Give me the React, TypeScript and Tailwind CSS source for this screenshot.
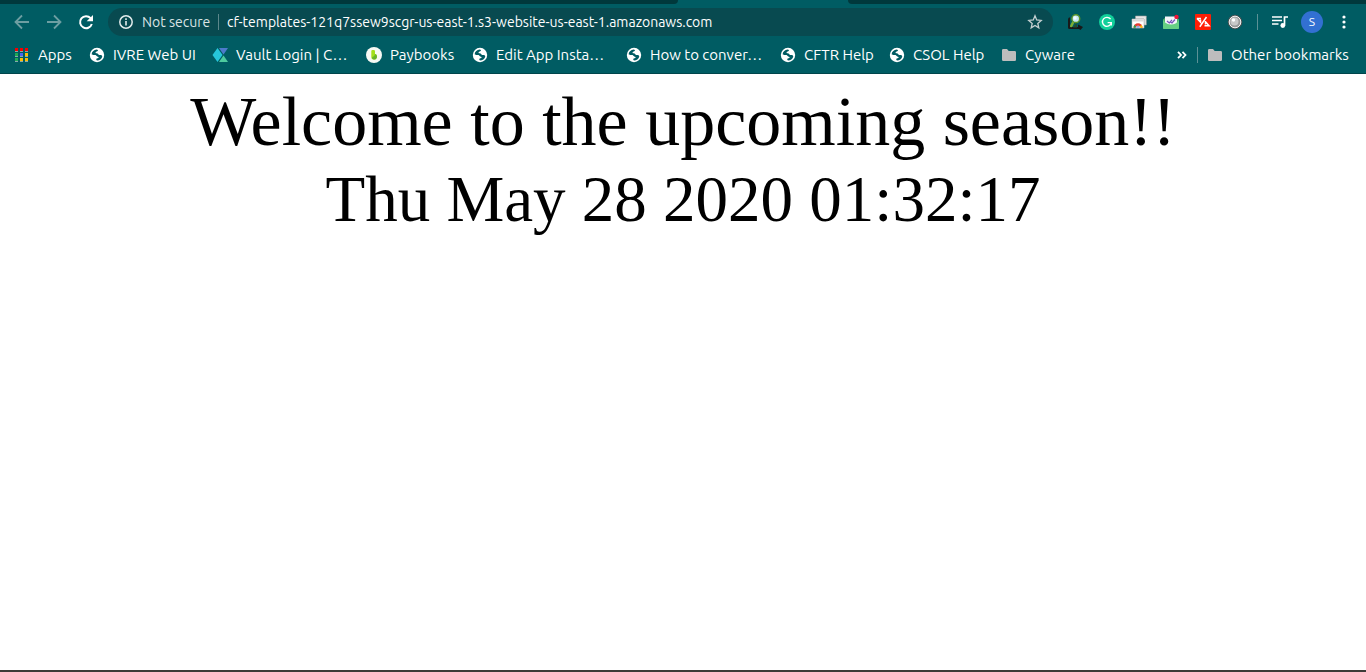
import type { ReactNode } from "react";

function GlobeIcon() {
  return (
    <svg className="size-4 shrink-0" viewBox="0 0 16 16" aria-hidden="true">
      <circle cx="8" cy="8" r="7.2" fill="#fff" />
      <path
        d="M2.6 7.2C3 4.6 5 3 7.6 2.6L9 2.9 8.6 4.2 7 4.8 6.4 6 8.6 6.4 10 8H12.4L13.3 9.4C12.6 11.8 10.6 13.4 8 13.5L7.2 12.8 7.6 11.6 9.4 11 9.6 9.9 8.2 9.6 6.6 8.1 4.2 8Z"
        fill="#005c63"
      />
      <path d="M9.4 3.2 11.2 4.2 10.8 5.4 9 5.8 8 5.2ZM3.2 9.4 6 9.8 6.6 11.4 5.8 12.6C4.4 11.9 3.5 10.8 3.2 9.4Z" fill="#fff" />
    </svg>
  );
}

function FolderIcon() {
  return (
    <svg className="size-4 shrink-0" viewBox="0 0 16 16" aria-hidden="true">
      <path d="M1 3.3Q1 2 2.3 2H6l1.7 2h6Q15 4 15 5.3v7.4q0 1.3-1.3 1.3H2.3Q1 14 1 12.700z" fill="#bdbdbd" />
    </svg>
  );
}

function AppsIcon() {
  const rows = [
    ["#f60000", "#f60000", "#f60000"],
    ["#1faa53", "#4a62f2", "#fbbc05"],
    ["#1faa53", "#fbbc05", "#fbbc05"],
  ];
  return (
    <svg className="size-4 shrink-0" viewBox="0 0 16 16" aria-hidden="true" shapeRendering="crispEdges">
      {rows.map((row, y) =>
        row.map((fill, x) => (
          <g key={`${x}-${y}`}>
            <rect x={1 + x * 5} y={1 + y * 5} width="3" height="3" fill={fill} />
            <rect x={1 + x * 5} y={4 + y * 5} width="3" height="1" fill="#8aa9ab" />
          </g>
        )),
      )}
    </svg>
  );
}

function VaultIcon() {
  return (
    <svg className="size-4 shrink-0" viewBox="0 0 16 16" aria-hidden="true">
      <path d="M5.500 1 10.500 8 5.500 15 .5 8z" fill="#26c6da" />
      <path d="M7 1h9l-4.500 6.500z" fill="#4c7bcb" />
      <path d="M7 15h9l-4.500-6.500z" fill="#4ecb9f" />
    </svg>
  );
}

function PaybooksIcon() {
  return (
    <svg className="size-4 shrink-0" viewBox="0 0 16 16" aria-hidden="true">
      <circle cx="8" cy="8" r="8" fill="#f7f9f4" />
      <path d="M5.300 4.200Q5.300 3 6.500 3h1.300Q9 3 9 4.200v2.900q2 .4 2 2.400 0 3.100-3.100 3.100-2.600 0-2.600-2.500z" fill="#a4e01b" />
      <path d="M7.600 12.600Q6 12.400 6 10.800q0-1 1.500-1.300Q9 9 9 7.100q2 .4 2 2.400 0 3.100-3.400 3.100z" fill="#69b42b" />
    </svg>
  );
}

function Stroke({ children }: { children: ReactNode }) {
  return (
    <svg className="size-4" viewBox="0 0 16 16" fill="none" stroke="currentColor" strokeWidth="1.8" aria-hidden="true">
      {children}
    </svg>
  );
}

type Bookmark = { label: string; icon: ReactNode; width: string };

const bookmarks: Bookmark[] = [
  { label: "Apps", icon: <AppsIcon />, width: "w-[75px]" },
  { label: "IVRE Web UI", icon: <GlobeIcon />, width: "w-[123px]" },
  { label: "Vault Login | C…", icon: <VaultIcon />, width: "w-[154px]" },
  { label: "Paybooks", icon: <PaybooksIcon />, width: "w-[106px]" },
  { label: "Edit App Insta…", icon: <GlobeIcon />, width: "w-[154px]" },
  { label: "How to conver…", icon: <GlobeIcon />, width: "w-[154px]" },
  { label: "CFTR Help", icon: <GlobeIcon />, width: "w-[109px]" },
  { label: "CSOL Help", icon: <GlobeIcon />, width: "w-[112px]" },
  { label: "Cyware", icon: <FolderIcon />, width: "w-[90px]" },
];

const extensions: { label: string; icon: ReactNode }[] = [
  {
    label: "Inspector",
    icon: (
      <>
        <path d="M2 3.500Q1 4 1 6v7.500Q1 15 2.500 15H12V13H3V3.500z" fill="#191919" />
        <path d="M11 10.500l5 2.500-2.500 3-2.500-1.500z" fill="#181818" />
        <path d="M9 9.500h1v4H6z" fill="#244b2f" />
        <path d="M6.500 7.500 4.300 12" stroke="#7caf35" strokeWidth="2.600" strokeLinecap="round" />
        <circle cx="8.800" cy="4.700" r="3.900" fill="#c5e7f5" stroke="#599329" strokeWidth="1.500" />
        <circle cx="8" cy="4" r="1.700" fill="#f2fbff" />
      </>
    ),
  },
  {
    label: "Grammar checker",
    icon: (
      <>
        <circle cx="8" cy="8" r="8" fill="#11cf9a" />
        <path d="M11.600 5.200A4.500 4.500 0 1 0 12.300 9M8.600 8.600h3.700v3" fill="none" stroke="#fff" strokeWidth="1.400" />
      </>
    ),
  },
  {
    label: "Web store",
    icon: (
      <>
        <path d="M4.500 2h10.800v9H13V5H4.500z" fill="#e8e8e8" stroke="#9a9a9a" strokeWidth=".6" />
        <path d="M1 5h12v9H1z" fill="#fff" stroke="#b5b5b5" strokeWidth=".6" />
        <path d="M1.300 5.300h11.500v2.200H1.300z" fill="#d9d9d9" />
        <path d="M2.500 13.700a4.500 4.500 0 0 1 9-0z" fill="#e53b30" />
        <path d="M2.500 13.700q0-1.800 1-3l2.500 3z" fill="#2ba24c" />
        <path d="M8 13.700l2.500-3q1 1.200 1 3z" fill="#fbc116" />
        <path d="M4.900 13.700a2.200 2.200 0 0 1 4.300 0z" fill="#4285f4" stroke="#fff" strokeWidth=".5" />
      </>
    ),
  },
  {
    label: "Mail tracker",
    icon: (
      <>
        <path d="M0 5.500 3 3h10L16 5.500V14q0 1-1 1H1q-1 0-1-1z" fill="#4caf6c" />
        <path d="M2 2.500h12v7L8 12 2 9z" fill="#f5f5fa" />
        <path d="M0 6l3 3.200q5 2.600 10 0L16 6v8q0 1-1 1H1q-1 0-1-1z" fill="#66cf84" />
        <path d="M4 7 6.300 9 9 5.800M7.500 8 9 9 12 5.500" fill="none" stroke="#7752bd" strokeWidth="1.200" />
        <circle cx="13.500" cy="2.900" r="2.200" fill="#f01438" />
      </>
    ),
  },
  {
    label: "Code tool",
    icon: (
      <>
        <rect width="16" height="16" rx="1" fill="#ff1e05" />
        <path d="M1.800 4.500H6M2 4.500 5.500 8.200V5.500M11.500 3 4.800 12.700M10.500 10.500V7.800L14 11.800H9.500" fill="none" stroke="#fff" strokeWidth="1.500" />
      </>
    ),
  },
  {
    label: "Recorder",
    icon: (
      <>
        <circle cx="8" cy="8" r="6.800" fill="#777" stroke="#494949" strokeWidth=".8" />
        <circle cx="8" cy="8" r="5.800" fill="#999" stroke="#f4f4f4" strokeWidth="1" />
        <circle cx="7.500" cy="7.500" r="4" fill="#c8c8c8" />
        <circle cx="6.500" cy="6" r="1.700" fill="#fff" />
      </>
    ),
  },
];

function BookmarkLink({ label, icon, width }: Bookmark) {
  return (
    <a href="#" className={`flex h-7 shrink-0 items-center gap-2 whitespace-nowrap ${width}`}>
      {icon}
      <span>{label}</span>
    </a>
  );
}

export default function App() {
  return (
    <div className="flex min-h-screen flex-col bg-white">
      <header className="border-b border-[#00454b] bg-[#005c63] font-['Ubuntu','Open_Sans',sans-serif] text-white">
        <div className="flex h-1">
          <div className="w-[678px] rounded-br bg-[#00383c]" />
          <div className="w-[170px]" />
          <div className="flex-1 rounded-bl bg-[#00383c]" />
        </div>

        <div className="flex h-9 items-center px-[14px]">
          <nav className="flex gap-4" aria-label="Navigation">
            <button type="button" aria-label="Back" className="text-[#6d9ea2]">
              <Stroke><path d="M15 8H2M8 1.500 1.500 8 8 14.500" /></Stroke>
            </button>
            <button type="button" aria-label="Forward" className="text-[#6d9ea2]">
              <Stroke><path d="M1 8h13M8 1.500 14.500 8 8 14.500" /></Stroke>
            </button>
            <button type="button" aria-label="Reload">
              <svg className="size-4" viewBox="0 0 16 16" aria-hidden="true">
                <path d="M12.600 4.200A6 6 0 1 0 13.800 10" fill="none" stroke="#fff" strokeWidth="2" />
                <path d="M15 1v6.300H8.700z" fill="#fff" />
              </svg>
            </button>
          </nav>

          <div className="ml-[14px] flex h-7 flex-1 items-center rounded-full bg-[#084a50] px-[10px] text-sm">
            <svg className="size-4 shrink-0" viewBox="0 0 16 16" fill="none" stroke="#e3ecec" aria-hidden="true">
              <circle cx="8" cy="8" r="6.200" strokeWidth="1.500" />
              <path d="M8 7v4.500M8 4.300v1.700" strokeWidth="1.600" />
            </svg>
            <label htmlFor="address" className="ml-2 w-[76px] whitespace-nowrap text-[#dbe4e5]">Not secure</label>
            <div className="h-4 w-px bg-[#5c878b]" />
            <input
              id="address"
              type="text"
              defaultValue="cf-templates-121q7ssew9scgr-us-east-1.s3-website-us-east-1.amazonaws.com"
              className="ml-2 min-w-0 flex-1 bg-transparent outline-none"
            />
            <button type="button" aria-label="Bookmark this page">
              <svg className="size-4" viewBox="0 0 16 16" fill="none" stroke="#c5d0d1" strokeWidth="1.300" aria-hidden="true">
                <path d="M8 1.800 9.700 6l4.500.4-3.400 3 1 4.400L8 11.500l-3.800 2.300 1-4.400-3.400-3L6.300 6z" />
              </svg>
            </button>
          </div>

          <div className="ml-[14px] flex gap-4">
            {extensions.map((extension) => (
              <button key={extension.label} type="button" aria-label={extension.label}>
                <svg className="size-4" viewBox="0 0 16 16" aria-hidden="true">{extension.icon}</svg>
              </button>
            ))}
          </div>
          <div className="mx-[14px] h-4 w-px bg-[#5c9196]" />
          <button type="button" aria-label="Media controls">
            <svg className="size-4" viewBox="0 0 16 16" aria-hidden="true">
              <path d="M0 3h10M0 6.500h10M0 10h6.500M12.500 11.500V3H16" fill="none" stroke="#fff" strokeWidth="1.700" />
              <circle cx="10.800" cy="11.500" r="2.400" fill="#fff" />
            </svg>
          </button>
          <button type="button" aria-label="Profile" className="ml-[13px] size-[22px] rounded-full bg-[#3270d2] text-xs leading-[22px]">
            S
          </button>
          <button type="button" aria-label="Menu" className="ml-[13px]">
            <svg className="size-4" viewBox="0 0 16 16" fill="#fff" aria-hidden="true">
              <circle cx="8" cy="3" r="1.600" />
              <circle cx="8" cy="8" r="1.600" />
              <circle cx="8" cy="13" r="1.600" />
            </svg>
          </button>
        </div>

        <nav className="flex h-[33px] items-start px-[14px] pt-px text-[15px]" aria-label="Bookmarks">
          {bookmarks.map((bookmark) => (
            <BookmarkLink key={bookmark.label} {...bookmark} />
          ))}
          <button type="button" aria-label="More bookmarks" className="ml-auto flex h-7 items-center">
            <svg className="size-3" viewBox="0 0 12 12" fill="none" stroke="#fff" strokeWidth="1.800" aria-hidden="true">
              <path d="M2 2.800 5 6 2 9.200M6.500 2.800l3 3.200-3 3.200" />
            </svg>
          </button>
          <div className="mx-[9px] mt-[6px] h-4 w-px bg-[#5c9196]" />
          <BookmarkLink label="Other bookmarks" icon={<FolderIcon />} width="w-[145px]" />
        </nav>
      </header>

      <main className="flex-1 pt-2 text-center font-['Liberation_Serif',serif] text-black">
        <h1 className="text-[70px] leading-[80px]">Welcome to the upcoming season!!</h1>
        <p className="text-[65px] leading-[74px]">Thu May 28 2020 01:32:17</p>
      </main>
      <footer className="h-[2px] bg-[#3c3b37]" />
    </div>
  );
}
